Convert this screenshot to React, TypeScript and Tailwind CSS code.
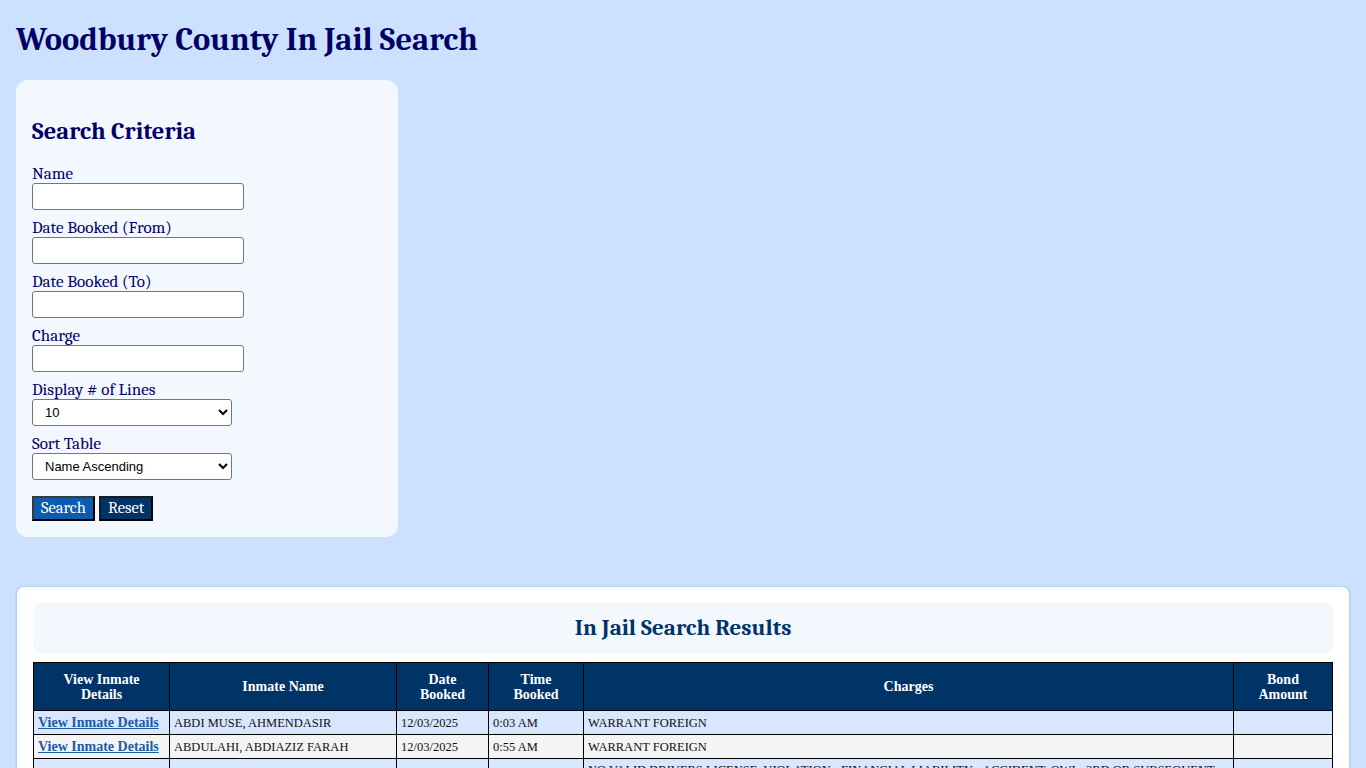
import React from "react";

const rows = [
  { name: "ABDI MUSE, AHMENDASIR", date: "12/03/2025", time: "0:03 AM", charges: "WARRANT FOREIGN" },
  { name: "ABDULAHI, ABDIAZIZ FARAH", date: "12/03/2025", time: "0:55 AM", charges: "WARRANT FOREIGN" },
  {
    name: "ADAMS, JOSHUA LEE",
    date: "12/02/2025",
    time: "9:41 PM",
    charges:
      "NO VALID DRIVERS LICENSE, VIOLATION - FINANCIAL LIABILITY - ACCIDENT, OWI - 3RD OR SUBSEQUENT, DRIVING WHILE BARRED HABITUAL OFFENDER",
  },
];

const serif = "font-['Cambria','Liberation_Serif',serif]";

function Field({ label, children }: { label: string; children: React.ReactNode }) {
  return (
    <div className="mb-[9px] flex flex-col items-start">
      <label className="text-[17px] leading-[18px] text-[#000066]">{label}</label>
      {children}
    </div>
  );
}

export default function App() {
  return (
    <div className={`min-h-screen bg-[#cce0ff] px-4 pt-[21px] pb-8 ${serif}`}>
      <h1 className="text-[32.6px] leading-[38px] font-bold text-[#000066]">Woodbury County In Jail Search</h1>

      {/* Search criteria panel */}
      <div className="mt-[21px] w-[382px] rounded-xl bg-[#f3f8ff] px-4 pt-[37px] pb-4">
        <h2 className="text-[24.5px] leading-[28px] font-bold text-[#000066]">Search Criteria</h2>
        <div className="mt-5">
          <Field label="Name">
            <input className="h-[27px] w-[212px] rounded-[3px] border border-[#767676] bg-white" />
          </Field>
          <Field label="Date Booked (From)">
            <input className="h-[27px] w-[212px] rounded-[3px] border border-[#767676] bg-white" />
          </Field>
          <Field label="Date Booked (To)">
            <input className="h-[27px] w-[212px] rounded-[3px] border border-[#767676] bg-white" />
          </Field>
          <Field label="Charge">
            <input className="h-[27px] w-[212px] rounded-[3px] border border-[#767676] bg-white" />
          </Field>
          <Field label="Display # of Lines">
            <select
              defaultValue="10"
              className="h-[27px] w-[200px] rounded-[3px] border border-[#767676] bg-white pl-2 font-['Liberation_Sans',Arial,sans-serif] text-[13px] text-black"
            >
              <option>10</option>
              <option>25</option>
              <option>50</option>
            </select>
          </Field>
          <Field label="Sort Table">
            <select className="h-[27px] w-[200px] rounded-[3px] border border-[#767676] bg-white pl-2 font-['Liberation_Sans',Arial,sans-serif] text-[13px] text-black">
              <option>Name Ascending</option>
              <option>Name Descending</option>
            </select>
          </Field>
        </div>
        <div className="mt-[16px] flex gap-1">
          <button className="h-[25px] border-2 border-t-[#3a3a3a] border-l-[#3a3a3a] border-r-black border-b-black bg-[#0b5cb0] px-[7px] text-[16.5px] leading-none text-white">
            Search
          </button>
          <button className="h-[25px] border-2 border-t-[#1a1a1a] border-l-[#1a1a1a] border-r-black border-b-black bg-[#003366] px-[7px] text-[16.5px] leading-none text-white">
            Reset
          </button>
        </div>
      </div>

      {/* Results */}
      <div className="mt-[49px] rounded-lg border border-[#b9cfee] bg-white p-4 shadow-sm">
        <div className="flex h-[50px] items-center justify-center rounded-lg bg-[#f3f8ff]">
          <h2 className="text-[23px] font-bold text-[#003366]">In Jail Search Results</h2>
        </div>
        <table className="mt-[9px] w-full border-collapse font-['Liberation_Serif',serif] text-[12.5px]">
          <thead>
            <tr className="bg-[#003366] text-[14px] text-white">
              <th className="h-[48px] w-[136px] border border-black px-1 leading-[15px] font-bold">View Inmate<br />Details</th>
              <th className="w-[227px] border border-black px-1 font-bold">Inmate Name</th>
              <th className="w-[92px] border border-black px-1 leading-[15px] font-bold">Date<br />Booked</th>
              <th className="w-[95px] border border-black px-1 leading-[15px] font-bold">Time<br />Booked</th>
              <th className="border border-black px-1 font-bold">Charges</th>
              <th className="w-[99px] border border-black px-1 leading-[15px] font-bold">Bond<br />Amount</th>
            </tr>
          </thead>
          <tbody className="leading-[16px] text-[#111]">
            {rows.map((r, i) => (
              <tr key={i} className={i % 2 === 0 ? "bg-[#d9e6ff]" : "bg-[#f4f4f4]"}>
                <td className="h-[24px] border border-black px-1">
                  <a href="#" className="text-[14px] font-bold text-[#1a5ca6] underline">View Inmate Details</a>
                </td>
                <td className="border border-black px-1">{r.name}</td>
                <td className="border border-black px-1">{r.date}</td>
                <td className="border border-black px-1">{r.time}</td>
                <td className="border border-black px-1 py-[3px]">{r.charges}</td>
                <td className="border border-black px-1"></td>
              </tr>
            ))}
          </tbody>
        </table>
      </div>
    </div>
  );
}
